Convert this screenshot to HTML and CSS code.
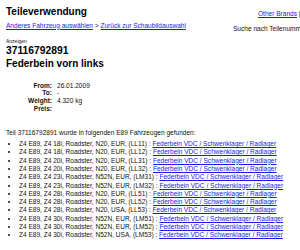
FILE: index.html
```html
<!DOCTYPE html>
<html lang="de">
<head>
    <meta charset="UTF-8">
    <title>Teileverwendung</title>
    <link rel="stylesheet" href="styles.css">
</head>
<body>
    <div class="page">
        <div class="top">
            <div class="head-left">
                <h1>Teileverwendung</h1>
                <div class="crumbs">
                    <a href="#">Anderes Fahrzeug auswählen</a> &gt; <a href="#">Zurück zur Schaubildauswahl</a>
                </div>
            </div>
            <div class="head-right">
                <div class="brands"><a href="#">Other Brands</a> | Deutsch</div>
                <div class="search">Suche nach Teilenummer:</div>
            </div>
        </div>

        <div class="small">Anzeigen</div>
        <h2 class="partno">37116792891</h2>
        <h3 class="partname">Federbein vorn links</h3>

        <div class="details">
            <div class="label">From:</div><div>26.01.2009</div>
            <div class="label">To:</div><div>-</div>
            <div class="label">Weight:</div><div>4.320 kg</div>
            <div class="label">Preis:</div><div></div>
        </div>

        <p class="found">Teil 37116792891 wurde in folgenden E89 Fahrzeugen gefunden:</p>

        <ul class="models" id="models"></ul>
    </div>
    <script>
        const models=[
            ['18i','N20','EUR','LL11'],
            ['18i','N20','EUR','LL12'],
            ['20i','N20','EUR','LL31'],
            ['20i','N20','EUR','LL32'],
            ['23i','N52N','EUR','LM31'],
            ['23i','N52N','EUR','LM32'],
            ['28i','N20','EUR','LL51'],
            ['28i','N20','EUR','LL52'],
            ['28i','N20','USA','LL53'],
            ['30i','N52N','EUR','LM51'],
            ['30i','N52N','EUR','LM52'],
            ['30i','N52N','USA','LM53']
        ];
        const list=document.getElementById('models');
        models.forEach(m => {
            const li=document.createElement('li');
            li.innerHTML=`Z4 E89, Z4 ${m[0]}, Roadster, ${m[1]}, ${m[2]}, (${m[3]}) : <a href="#">Federbein VDC / Schwenklager / Radlager</a>`;
            list.appendChild(li);
        });
    </script>
</body>
</html>
```

FILE: styles.css
```css
html{
    overflow: hidden;
}
body{
    margin: 0;
    font-family: "Liberation Sans", Arial, sans-serif;
    font-size: 6.55px;
    line-height: 7.5px;
    color: #111;
    background-color: #fff;
}
a{
    color: #1a1aee;
}
.page{
    width: 420px;
    padding: 6px 0 0 6px;
}
.top{
    display: grid;
    grid-template-columns: 227px auto;
}
h1{
    font-size: 10px;
    line-height: 11.5px;
    margin: 0;
    color: #000;
}
.crumbs{
    margin-top: 4px;
    white-space: nowrap;
}
.head-right{
    padding-top: 4px;
    white-space: nowrap;
}
.brands{
    padding-left: 25px;
}
.search{
    margin-top: 7px;
}
.small{
    font-size: 5px;
    line-height: 6px;
    margin-top: 5.5px;
}
.partno{
    font-size: 10.3px;
    line-height: 12px;
    margin: 1.7px 0 0;
    color: #000;
}
.partname{
    font-size: 10px;
    line-height: 12px;
    margin: 1.3px 0 0;
    color: #000;
}
.details{
    display: grid;
    grid-template-columns: 46px auto;
    column-gap: 5px;
    grid-auto-rows: 7.7px;
    margin-top: 11.3px;
}
.label{
    font-weight: bold;
    text-align: right;
}
.found{
    margin: 16px 0 0;
}
.models{
    margin: 4px 0 0;
    padding-left: 13px;
    line-height: 8.3px;
    white-space: nowrap;
}
```
